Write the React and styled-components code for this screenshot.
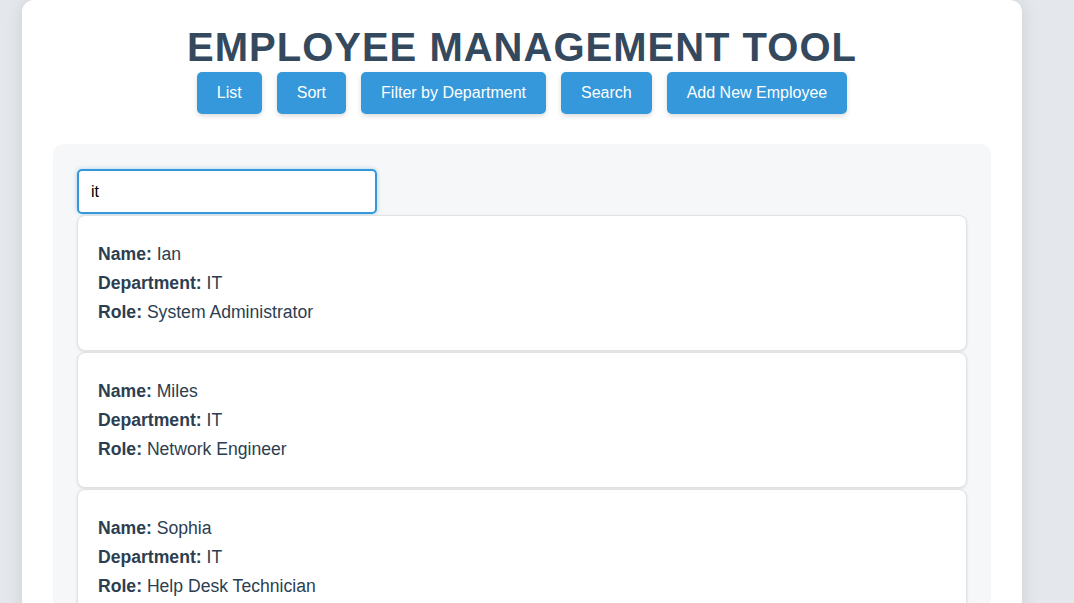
import styled, { createGlobalStyle } from "styled-components";

const GlobalStyle = createGlobalStyle`
	html, body {
		margin: 0;
		padding: 0;
		background-color: #e4e7eb;
		font-family: "Liberation Sans", Arial, sans-serif;
		overflow: hidden;
	}
`;

const employees = [
	{ id: 1, name: "Ian", department: "IT", role: "System Administrator" },
	{ id: 2, name: "Miles", department: "IT", role: "Network Engineer" },
	{ id: 3, name: "Sophia", department: "IT", role: "Help Desk Technician" },
];

const buttons = ["List", "Sort", "Filter by Department", "Search", "Add New Employee"];

const App = () => {
	return (
		<>
			<GlobalStyle />
			<Page>
				<Container>
					<Title>Employee Management Tool</Title>
					<Toolbar>
						{buttons.map((label) => (
							<Button key={label}>{label}</Button>
						))}
					</Toolbar>
					<Panel>
						<SearchInput
							defaultValue="it"
							autoFocus
							onFocus={(e) => e.target.setSelectionRange(2, 2)}
						/>
						<List>
							{employees.map((item) => (
								<Card key={item.id}>
									<Line>
										<b>Name:</b> {item.name}
									</Line>
									<Line>
										<b>Department:</b> {item.department}
									</Line>
									<Line>
										<b>Role:</b> {item.role}
									</Line>
								</Card>
							))}
						</List>
					</Panel>
				</Container>
			</Page>
		</>
	);
};

export default App;

const Page = styled.div`
	min-height: 603px;
	padding-left: 22px;
	display: flex;
`;

const Container = styled.div`
	width: 1000px;
	box-sizing: border-box;
	background-color: #fff;
	border-radius: 12px 12px 0 0;
	box-shadow: 0 0 18px rgba(0, 0, 0, 0.1);
	padding: 23px 31px 40px;
	display: flex;
	flex-direction: column;
	align-items: stretch;
`;

const Title = styled.h1`
	margin: 0;
	text-align: center;
	text-transform: uppercase;
	font-size: 40px;
	line-height: 49px;
	letter-spacing: 1px;
	font-weight: bold;
	color: #34495e;
`;

const Toolbar = styled.div`
	display: flex;
	justify-content: center;
	gap: 15px;
`;

const Button = styled.button`
	height: 42px;
	padding: 0 20px;
	border: none;
	border-radius: 5px;
	background-color: #3498db;
	color: #fff;
	font-family: "Liberation Sans", Arial, sans-serif;
	font-size: 16px;
	box-shadow: 0 2px 5px rgba(0, 0, 0, 0.15);
	cursor: pointer;
`;

const Panel = styled.section`
	margin-top: 30px;
	background-color: #f6f7f9;
	border-radius: 10px;
	padding: 25px 24px;
	display: flex;
	flex-direction: column;
	align-items: flex-start;
`;

const SearchInput = styled.input`
	width: 300px;
	height: 45px;
	box-sizing: border-box;
	border: 2px solid #3498db;
	border-radius: 5px;
	padding: 0 12px;
	font-family: "Liberation Sans", Arial, sans-serif;
	font-size: 16px;
	color: #000;
	caret-color: #000;
	outline: none;
	box-shadow: 0 0 4px rgba(52, 152, 219, 0.4);
`;

const List = styled.div`
	align-self: stretch;
	margin-top: 1px;
	display: flex;
	flex-direction: column;
	gap: 1px;
`;

const Card = styled.div`
	background-color: #fff;
	border: 1px solid #e2e2e2;
	border-radius: 8px;
	box-shadow: 0 1px 3px rgba(0, 0, 0, 0.1);
	padding: 24px 20px 23px;
`;

const Line = styled.p`
	margin: 0;
	font-size: 17.6px;
	line-height: 29px;
	color: #2c3e50;
	b {
		font-weight: bold;
	}
`;
